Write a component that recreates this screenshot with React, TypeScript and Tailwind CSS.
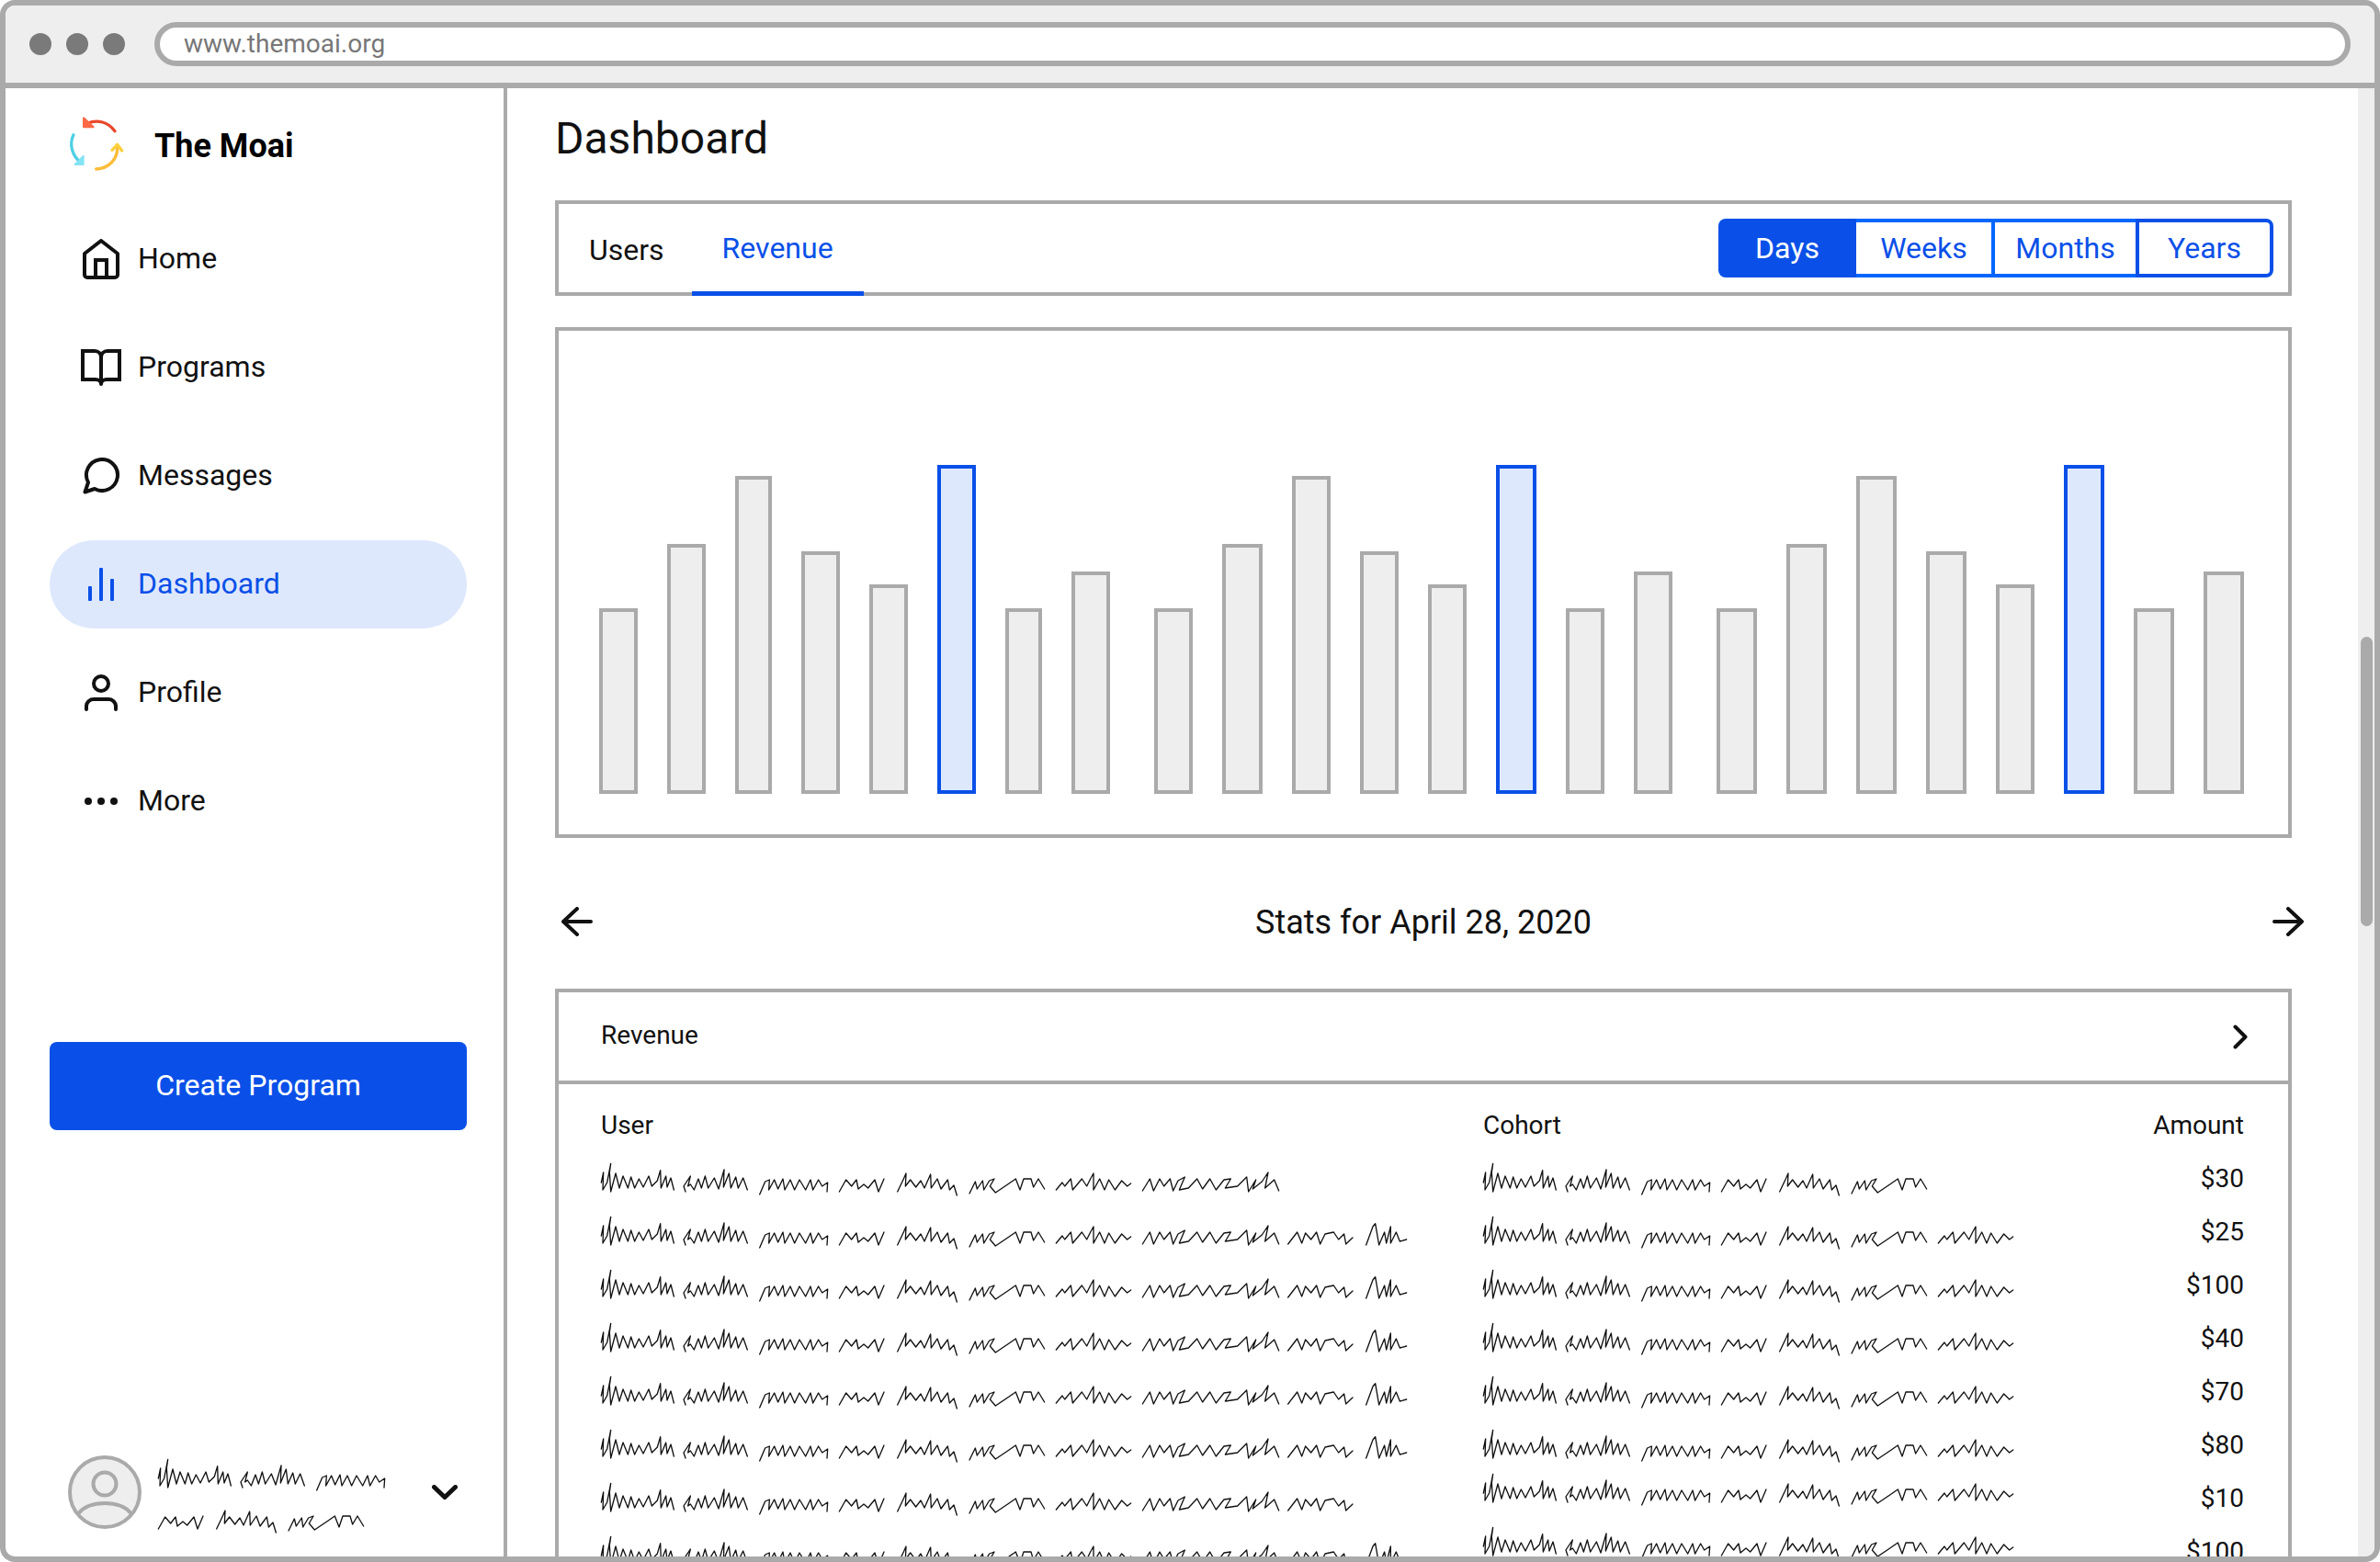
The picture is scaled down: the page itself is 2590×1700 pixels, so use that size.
import React from "react";

const BLUE = "#0a50e8";

// scribble placeholder text, one point list per word (3x units)
const WORDS: number[][][] = [
  [[13,92],[20,70],[18,108],[32,92],[44,28],[40,70],[44,112],[60,72],[72,104],[84,78],[100,104],[110,80],[122,104],[136,84],[150,102],[168,78],[178,100],[196,88],[206,50],[208,104],[224,78],[228,102],[240,82],[250,108]],
  [[288,112],[282,100],[304,78],[296,100],[304,96],[316,108],[330,84],[340,104],[352,78],[362,104],[382,82],[396,106],[414,48],[412,102],[430,72],[436,104],[452,80],[460,104],[476,82],[490,108]],
  [[530,118],[548,90],[562,86],[560,108],[578,86],[590,106],[606,84],[612,108],[630,86],[644,108],[660,86],[680,108],[696,86],[704,108],[722,86],[734,100],[752,92],[750,112]],
  [[790,112],[812,86],[830,100],[846,86],[852,106],[870,96],[884,104],[906,86],[918,112],[936,84]],
  [[980,112],[1000,84],[1008,60],[1006,100],[1022,86],[1040,102],[1056,88],[1068,104],[1088,74],[1090,104],[1110,84],[1122,106],[1144,86],[1150,108],[1164,98],[1174,120]],
  [[1215,116],[1234,90],[1240,106],[1258,88],[1262,108],[1280,88],[1296,84],[1282,100],[1300,114],[1340,96],[1366,84],[1380,108],[1392,84],[1416,84],[1424,102],[1440,84],[1460,106]],
  [[1498,108],[1518,92],[1526,100],[1546,84],[1552,108],[1582,84],[1598,100],[1610,84],[1620,60],[1620,108],[1640,84],[1656,108],[1670,86],[1690,108],[1712,88],[1730,100],[1742,94]],
  [[1780,110],[1804,84],[1816,110],[1836,84],[1850,100],[1870,84],[1880,110],[1896,88],[1918,80],[1900,108],[1930,104],[1958,84],[1976,106],[2000,84],[2020,108],[2046,86],[2068,84],[2050,104],[2090,100],[2120,80],[2126,112],[2150,86],[2140,106],[2170,90],[2190,70],[2180,104],[2210,86],[2225,110]],
  [[2255,110],[2285,84],[2300,108],[2312,86],[2330,100],[2348,84],[2360,110],[2376,88],[2404,84],[2420,100],[2438,88],[2444,110],[2466,96]],
  [[2510,112],[2532,60],[2540,50],[2552,112],[2570,84],[2576,108],[2590,60],[2590,108],[2608,84],[2620,104],[2642,100]],
];

// the small wiggles read taller in the picture than the traced points
const stretch = (y: number) => (y > 66 ? Math.round(96 + (y - 96) * 1.5) : y);

function Scribble({ from = 0, to }: { from?: number; to: number }) {
  const words = WORDS.slice(from, to);
  const xs = words.flat().map((p) => p[0]);
  const minX = Math.min(...xs) - 4;
  const maxX = Math.max(...xs) + 4;
  return (
    <svg width={(maxX - minX) / 3} height={45} viewBox={`${minX} 0 ${maxX - minX} 135`} className="block shrink-0">
      {words.map((w, i) => (
        <polyline key={i} points={w.map((p) => `${p[0]},${stretch(p[1])}`).join(" ")} fill="none" stroke="#111" strokeWidth={4} strokeLinejoin="round" strokeLinecap="round" />
      ))}
    </svg>
  );
}

function Logo() {
  return (
    <svg width={90} height={80} viewBox="0 0 270 240" className="shrink-0" fill="none" strokeWidth={10} strokeLinecap="round">
      <path d="M195 83C170 50 135 45 105 58" stroke="#e9472b" />
      <path d="M93 40V70H125Z" fill="#ff6a45" stroke="#ff6a45" strokeWidth={6} strokeLinejoin="round" />
      <path d="M60 95C45 125 55 165 85 186" stroke="#4fd0e4" />
      <path d="M65 192H92V165Z" fill="#84e4f3" stroke="#84e4f3" strokeWidth={6} strokeLinejoin="round" />
      <path d="M134 207C175 205 205 175 203 135" stroke="#fdbd39" />
      <path d="M186 145L203 127L218 147" stroke="#fdd13b" strokeLinejoin="round" />
    </svg>
  );
}

const iconProps = { fill: "none", stroke: "#111", strokeWidth: 4, strokeLinejoin: "round" as const, strokeLinecap: "round" as const };

function HomeIcon() {
  return (
    <svg width={40} height={44} viewBox="0 0 40 44" {...iconProps} className="shrink-0">
      <path d="M2 16L20 2L38 16V39A3 3 0 0 1 35 42H5A3 3 0 0 1 2 39Z" />
      <path d="M14 42V23H26V42" strokeLinecap="butt" strokeLinejoin="miter" />
    </svg>
  );
}
function BookIcon() {
  return (
    <svg width={44} height={40} viewBox="0 0 44 40" {...iconProps} strokeLinejoin="miter" className="shrink-0">
      <path d="M2 2H15C19 2 22 5 22 9C22 5 25 2 29 2H42V33H28C25 33 22 35 22 38C22 35 19 33 16 33H2Z" />
      <path d="M22 9V38" />
    </svg>
  );
}
function ChatIcon() {
  return (
    <svg width={40} height={40} viewBox="0 0 40 40" {...iconProps} className="shrink-0">
      <path d="M2.5 37.5L6 27A17 17 0 1 1 13 34Z" />
    </svg>
  );
}
function BarsIcon() {
  return (
    <svg width={36} height={36} viewBox="0 0 36 36" fill={BLUE} className="shrink-0">
      <rect x={4} y={20} width={4} height={16} rx={1} />
      <rect x={16} y={0} width={4} height={36} rx={1} />
      <rect x={28} y={12} width={4} height={24} rx={1} />
    </svg>
  );
}
function PersonIcon() {
  return (
    <svg width={36} height={40} viewBox="0 0 36 40" {...iconProps} className="shrink-0">
      <circle cx={18} cy={10} r={8} />
      <path d="M2 38V34A8 8 0 0 1 10 27H26A8 8 0 0 1 34 34V38" />
    </svg>
  );
}
function DotsIcon() {
  return (
    <svg width={36} height={8} viewBox="0 0 36 8" fill="#111" className="shrink-0">
      <circle cx={4} cy={4} r={4} />
      <circle cx={18} cy={4} r={4} />
      <circle cx={32} cy={4} r={4} />
    </svg>
  );
}
function ArrowIcon({ flip }: { flip?: boolean }) {
  return (
    <svg width={34} height={32} viewBox="0 0 34 32" {...iconProps} className={flip ? "-scale-x-100" : ""}>
      <path d="M2 16H32M17 2L2 16L17 30" />
    </svg>
  );
}

const NAV = [
  { label: "Home", icon: <HomeIcon /> },
  { label: "Programs", icon: <BookIcon /> },
  { label: "Messages", icon: <ChatIcon /> },
  { label: "Dashboard", icon: <BarsIcon />, active: true },
  { label: "Profile", icon: <PersonIcon /> },
  { label: "More", icon: <DotsIcon /> },
];

function Sidebar() {
  return (
    <aside className="w-[546px] shrink-0 border-r-4 border-[#aaa] flex flex-col pt-[19px]">
      <div className="flex items-center gap-[18px] ml-[54px]">
        <Logo />
        <span className="text-[36px] font-bold text-black pt-[7px]">The Moai</span>
      </div>
      <nav className="mt-[39px] ml-[48px] w-[454px] flex flex-col gap-[22px]">
        {NAV.map((item) => (
          <div
            key={item.label}
            className={`h-[96px] rounded-[48px] flex items-center pl-[36px] text-[32px] ${
              item.active ? "bg-[#dee8fd] text-[#0a50e8]" : "text-[#111]"
            }`}
          >
            <span className="w-[40px] flex justify-center">{item.icon}</span>
            <span className="ml-[20px] pb-[3px]">{item.label}</span>
          </div>
        ))}
      </nav>
      <button className="mt-[214px] ml-[48px] w-[454px] h-[96px] rounded-[8px] bg-[#0a50e8] text-white text-[32px] pb-[2px]">
        Create Program
      </button>
      <div className="mt-auto mb-[25px] ml-[68px] pr-[50px] flex items-center">
        <svg width={80} height={80} viewBox="0 0 80 80" fill="none" stroke="#aaa" strokeWidth={4} className="shrink-0">
          <circle cx={40} cy={40} r={38} fill="#eee" />
          <circle cx={40} cy={31} r={12.5} />
          <path d="M11.5 63C18 55 28 52 40 52C52 52 62 55 68.5 63" />
        </svg>
        <div className="ml-[17px] flex flex-col">
          <Scribble to={3} />
          <Scribble from={3} to={6} />
        </div>
        <svg width={28} height={16} viewBox="0 0 28 16" fill="none" stroke="#111" strokeWidth={5} strokeLinecap="round" strokeLinejoin="round" className="ml-auto">
          <path d="M2.5 2.5L14 13.5L25.5 2.5" />
        </svg>
      </div>
    </aside>
  );
}

const RANGES = [
  { label: "Days", cls: "w-[150px] bg-[#0a50e8] text-white rounded-l-[8px]" },
  { label: "Weeks", cls: "w-[151px] border-y-4 border-r-4 border-[#0066ff] text-[#0a50e8]" },
  { label: "Months", cls: "w-[153px] border-y-4 border-[#0066ff] text-[#0a50e8]" },
  { label: "Years", cls: "w-[150px] border-4 border-[#0a50e8] rounded-r-[8px] text-[#0a50e8]" },
];

function TabBar() {
  return (
    <div className="h-[104px] border-4 border-[#aaa] flex items-start justify-between">
      <div className="flex text-[32px]">
        <div className="h-[100px] pl-[33px] pr-[30px] flex items-center text-[#111]">Users</div>
        <div className="h-[100px] px-[33px] flex items-center text-[#0a50e8] border-b-[5px] border-[#0a50e8]">Revenue</div>
      </div>
      <div className="flex h-[64px] mt-[16px] mr-[16px] text-[32px]">
        {RANGES.map((r) => (
          <div key={r.label} className={`flex items-center justify-center ${r.cls}`}>
            {r.label}
          </div>
        ))}
      </div>
    </div>
  );
}

// [width, height, selected]
const BAR_GROUPS: [number, number, boolean?][][] = [
  [[42, 202], [42, 272], [40, 346], [42, 264], [42, 228], [42, 358, true], [40, 202], [42, 242]],
  [[42, 202], [44, 272], [42, 346], [42, 264], [42, 228], [44, 358, true], [42, 202], [42, 242]],
  [[44, 202], [44, 272], [44, 346], [44, 264], [42, 228], [44, 358, true], [44, 202], [44, 242]],
];

function Chart() {
  return (
    <div className="mt-[34px] h-[556px] border-4 border-[#aaa] flex items-end gap-[48px] pl-[44px] pb-[44px]">
      {BAR_GROUPS.map((group, i) => (
        <div key={i} className="flex items-end gap-[32px]">
          {group.map(([w, h, selected], j) => (
            <div
              key={j}
              className={`border-4 ${selected ? "border-[#0a50e8] bg-[#dee8fd]" : "border-[#aaa] bg-[#eee]"}`}
              style={{ width: w, height: h }}
            />
          ))}
        </div>
      ))}
    </div>
  );
}

const ROWS = [
  { user: 8, cohort: 6, amount: "$30" },
  { user: 10, cohort: 7, amount: "$25" },
  { user: 10, cohort: 7, amount: "$100" },
  { user: 10, cohort: 7, amount: "$40" },
  { user: 10, cohort: 7, amount: "$70" },
  { user: 10, cohort: 7, amount: "$80" },
  { user: 9, cohort: 7, amount: "$10", up: true },
  { user: 10, cohort: 7, amount: "$100", up: true },
];

function RevenueTable() {
  return (
    <div className="mt-[41px] border-x-4 border-t-4 border-[#aaa] text-[28px] text-[#111]">
      <div className="h-[100px] border-b-4 border-[#aaa] flex items-center justify-between pl-[46px] pr-[44px]">
        <span className="pb-[2px]">Revenue</span>
        <svg width={16} height={27} viewBox="0 0 16 27" fill="none" stroke="#111" strokeWidth={4} strokeLinecap="round" strokeLinejoin="round">
          <path d="M2.5 2.5L13.5 13.5L2.5 24.5" />
        </svg>
      </div>
      <div className="pl-[45px] pr-[48px] pt-[27px]">
        <div className="grid grid-cols-[960px_1fr_auto] h-[36px] leading-[36px] pl-[1px] mb-[14px]">
          <span>User</span>
          <span>Cohort</span>
          <span>Amount</span>
        </div>
        <div className="flex flex-col gap-[8px]">
          {ROWS.map((row, i) => (
            <div key={i} className="grid grid-cols-[960px_1fr_auto] h-[50px] items-start">
              <Scribble to={row.user} />
              <div className={row.up ? "-mt-[10px]" : ""}>
                <Scribble to={row.cohort} />
              </div>
              <span className="leading-[50px] pt-[1px] text-right">{row.amount}</span>
            </div>
          ))}
        </div>
      </div>
    </div>
  );
}

export default function App() {
  return (
    <div className="w-[2590px] h-[1700px] bg-white font-['Roboto',sans-serif] border-[6px] border-[#aaa] rounded-[16px] overflow-hidden flex flex-col">
      <header className="h-[90px] shrink-0 bg-[#eee] border-b-[6px] border-[#aaa] flex items-center pl-[26px] pr-[26px]">
        <div className="flex gap-[16px]">
          <span className="w-[24px] h-[24px] rounded-full bg-[#7a7a7a]" />
          <span className="w-[24px] h-[24px] rounded-full bg-[#7a7a7a]" />
          <span className="w-[24px] h-[24px] rounded-full bg-[#7a7a7a]" />
        </div>
        <div className="ml-[32px] flex-1 h-[48px] rounded-[24px] border-[6px] border-[#aaa] bg-white flex items-center pl-[26px] text-[28px] text-[#777]">
          www.themoai.org
        </div>
      </header>
      <div className="flex-1 flex min-h-0">
        <Sidebar />
        <main className="flex-1 min-w-0 overflow-hidden pl-[52px] pr-[72px] pt-[27px]">
          <h1 className="text-[48px] leading-[56px] text-[#111] mb-[39px]">Dashboard</h1>
          <TabBar />
          <Chart />
          <div className="mt-[59px] h-[64px] grid grid-cols-[1fr_auto_1fr] items-center text-[36px] text-[#111]">
            <div className="pl-[7px]">
              <ArrowIcon />
            </div>
            <span className="pt-[1px]">Stats for April 28, 2020</span>
            <div className="flex justify-end -mr-[13px]">
              <ArrowIcon flip />
            </div>
          </div>
          <RevenueTable />
        </main>
        <div className="w-[18px] shrink-0 bg-[#eee] pl-[3px]">
          <div className="mt-[597px] w-[13px] h-[315px] rounded-full bg-[#aaa]" />
        </div>
      </div>
    </div>
  );
}
